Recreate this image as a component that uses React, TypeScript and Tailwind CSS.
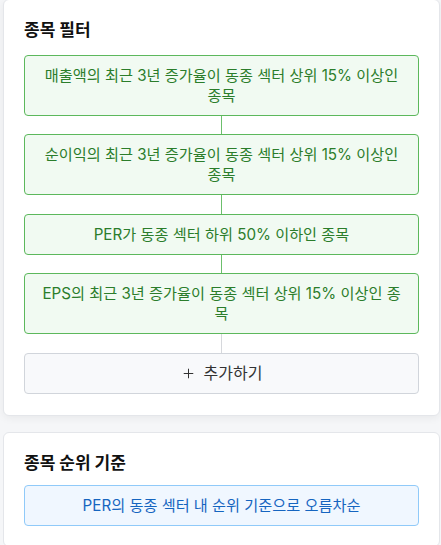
import { Plus } from "lucide-react"

const filters = [
  "매출액의 최근 3년 증가율이 동종 섹터 상위 15% 이상인 종목",
  "순이익의 최근 3년 증가율이 동종 섹터 상위 15% 이상인 종목",
  "PER가 동종 섹터 하위 50% 이하인 종목",
  "EPS의 최근 3년 증가율이 동종 섹터 상위 15% 이상인 종목",
]

export default function App() {
  return (
    <div
      className="min-h-screen bg-[#f5f6f8] pl-[3px] pr-px"
      style={{ fontFamily: 'Inter, "Noto Sans CJK KR", sans-serif' }}
    >
      {/* Filter card */}
      <section className="-mt-px rounded-md border border-[#e4e6ea] bg-white px-5 pt-4 pb-[21px] shadow-[0_2px_8px_rgba(0,0,0,0.06)]">
        <h2 className="mb-[11px] text-[17px] leading-7 font-bold text-[#111]">종목 필터</h2>

        <div className="flex flex-col">
          {filters.map((text, i) => (
            <div key={text} className="flex flex-col">
              <div className="rounded-[4px] border border-[#5cb85c] bg-[#f1faf2] px-[15px] pt-[10px] pb-[9px] text-center text-[15.2px] leading-5 text-[#2b7d2b]">
                {text}
              </div>
              {i < filters.length - 1 ? (
                <div className={`mx-auto w-px bg-[#6cbf6c] ${i === 1 ? "h-[19px]" : "h-[18px]"}`} />
              ) : (
                <div className="mx-auto h-[19px] w-px bg-[#d6d8dc]" />
              )}
            </div>
          ))}

          <button className="flex items-center justify-center gap-2 rounded-[4px] border border-[#d1d5db] bg-[#f8f9fb] py-2 text-base leading-[23px] text-[#333]">
            <Plus size={15} strokeWidth={1.6} />
            <span>추가하기</span>
          </button>
        </div>
      </section>

      {/* Ranking card */}
      <section className="mt-4 rounded-md border border-[#e4e6ea] bg-white px-5 pt-4 pb-5">
        <h2 className="mb-2 text-[17px] leading-7 font-bold text-[#111]">종목 순위 기준</h2>
        <div className="rounded-[4px] border border-[#90caf9] bg-[#f0f7ff] pt-[10px] pb-[9px] text-center text-[15.2px] leading-5 text-[#1565c0]">
          PER의 동종 섹터 내 순위 기준으로 오름차순
        </div>
      </section>
    </div>
  )
}
